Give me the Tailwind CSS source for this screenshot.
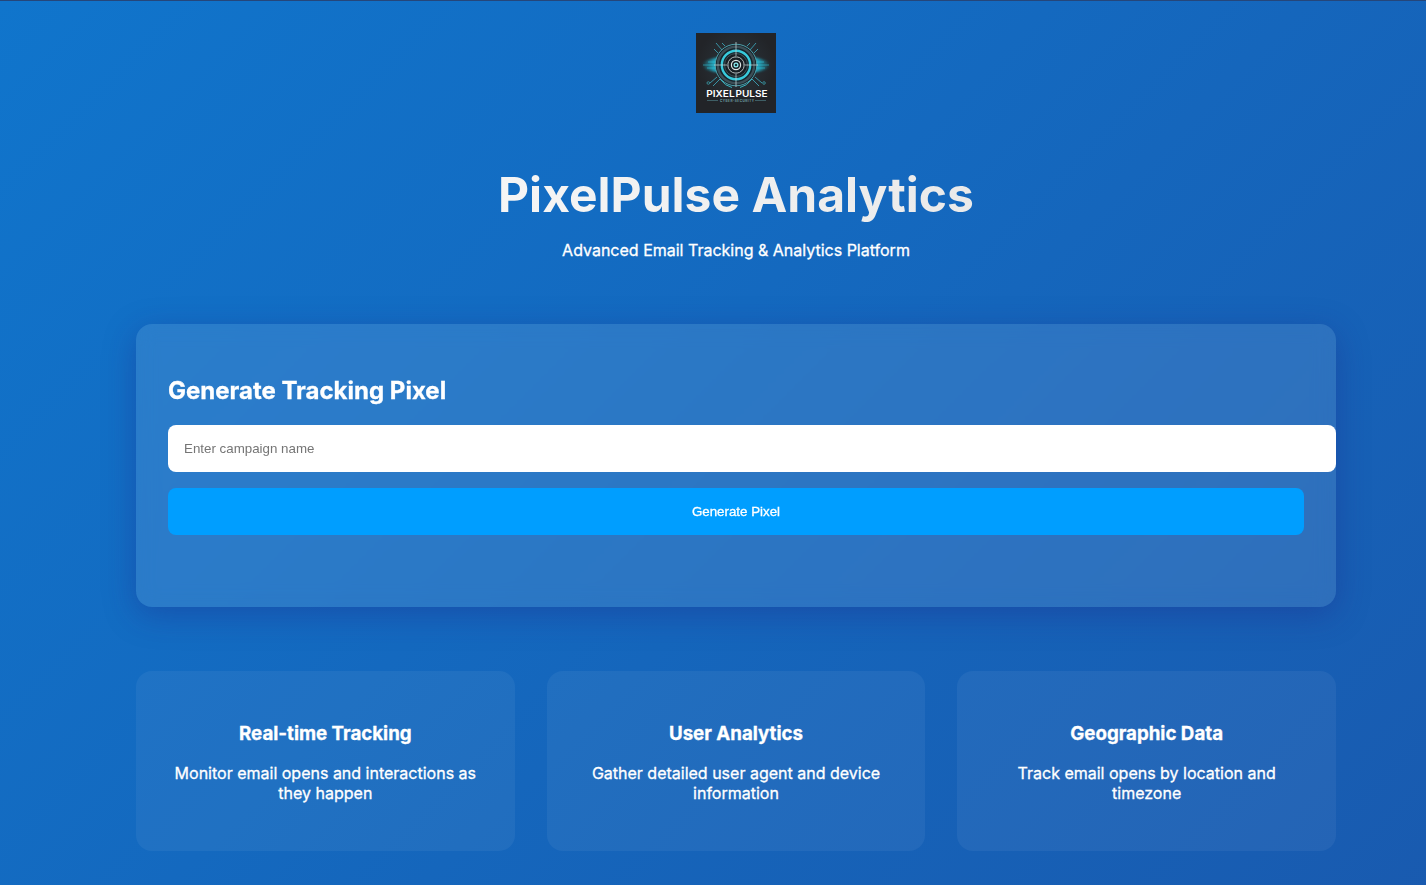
<!DOCTYPE html>
<html lang="en">
<head>
<meta charset="utf-8">
<title>PixelPulse Analytics</title>
<script src="https://cdn.jsdelivr.net/npm/@tailwindcss/browser@4"></script>
</head>
<body class="overflow-hidden">
<div class="w-[1472px] h-[885px] border-t border-[#25467a] bg-[linear-gradient(135deg,#1075cc_0%,#195aaf_100%)] text-white font-['Inter',sans-serif] overflow-hidden">
  <main class="w-[1200px] mx-auto pt-8">
    <header class="flex flex-col items-center text-center">
      <svg class="w-20 h-20" viewBox="0 0 80 80" role="img" aria-label="PixelPulse">
        <defs>
          <radialGradient id="bg"><stop offset="0" stop-color="#2c363d"/><stop offset="1" stop-color="#222428"/></radialGradient>
          <linearGradient id="glow"><stop offset="0" stop-color="#19b5d1" stop-opacity="0"/><stop offset=".2" stop-color="#22bedb" stop-opacity=".9"/><stop offset=".5" stop-color="#147083" stop-opacity=".3"/><stop offset=".8" stop-color="#22bedb" stop-opacity=".9"/><stop offset="1" stop-color="#19b5d1" stop-opacity="0"/></linearGradient>
          <filter id="soft" x="-20%" y="-50%" width="140%" height="200%"><feGaussianBlur stdDeviation="1.3"/></filter>
        </defs>
        <rect width="80" height="80" fill="#222428"/>
        <circle cx="40" cy="32" r="39" fill="url(#bg)"/>
        <ellipse cx="40" cy="32" rx="34" ry="9" fill="url(#glow)" filter="url(#soft)"/>
        <path d="M7 32H21M12 29H21M11 35H21M59 32H73M59 29H68M59 35H69" stroke="#35d4ea" stroke-width=".8" opacity=".65"/>
        <path d="M26 17 20 10M22 20 18 16M54 17 60 10M58 20 62 16M24 46 17 53M21 44 14 50M56 46 63 53M59 44 66 50M29 13 26 10M51 13 54 10" stroke="#3994a6" stroke-width="1"/>
        <circle cx="40" cy="32" r="20.8" fill="#17242b" stroke="#52a9b5" stroke-width=".9"/>
        <circle cx="40" cy="32" r="18.2" fill="none" stroke="#3c4e56" stroke-width="2.4"/>
        <circle cx="40" cy="32" r="14.2" fill="none" stroke="#38cadb" stroke-width="2.4"/>
        <circle cx="40" cy="32" r="11.5" fill="#181f24" stroke="#465f66" stroke-width=".8"/>
        <circle cx="40" cy="32" r="8.2" fill="none" stroke="#b1b9ba" stroke-width="1" stroke-dasharray="11.4 1.48" stroke-dashoffset="-.74"/>
        <path d="M40 9V25M40 39V54M18 32H33M47 32H62" stroke="#b9cccd" stroke-width=".8"/>
        <circle cx="40" cy="32" r="4.6" fill="#181f24" stroke="#dce4e4" stroke-width="1.2"/>
        <circle cx="40" cy="32" r="1.9" fill="#163039" stroke="#8df0f4" stroke-width="1.2"/>
        <path d="M24 46Q29 53 36 54.5M56 46Q51 53 44 54.5" fill="none" stroke="#37b4c1" stroke-width="1"/>
        <circle cx="12.3" cy="50" r="1.3" fill="none" stroke="#3a9aa7" stroke-width=".8"/><circle cx="68" cy="50" r="1.3" fill="none" stroke="#3a9aa7" stroke-width=".8"/>
        <g font-family="Inter, sans-serif" font-size="9.2" font-weight="600" fill="#fff">
          <text x="10.3" y="64.4" textLength="28.4" lengthAdjust="spacingAndGlyphs">PIXEL</text>
          <text x="39.5" y="64.4" textLength="32" lengthAdjust="spacingAndGlyphs">PULSE</text>
        </g>
        <path d="M11 67.5H22M59 67.5H70" stroke="#52878f" stroke-width=".6"/>
        <text x="24" y="68.8" font-family="Inter, sans-serif" font-size="3.2" font-weight="600" fill="#79adb3" textLength="34">CYBER-SECURITY</text>
      </svg>
      <h1 class="mt-[53px] text-5xl leading-[58px] font-bold bg-[linear-gradient(45deg,#ffffff,#e0e0e0)] bg-clip-text text-transparent w-full">PixelPulse Analytics</h1>
      <p class="mt-4 text-base leading-5 [-webkit-text-stroke:0.3px_white]">Advanced Email Tracking &amp; Analytics Platform</p>
    </header>
    <section class="mt-16 h-[283px] rounded-2xl bg-white/10 backdrop-blur-[10px] px-8 pt-[52px] shadow-[0_8px_32px_0_rgba(31,38,135,0.37)]">
      <h2 class="text-2xl leading-[29px] font-bold [-webkit-text-stroke:0.3px_white]">Generate Tracking Pixel</h2>
      <input class="mt-5 block w-[1168px] h-[47px] rounded-lg bg-white px-4 font-['Liberation_Sans',Arial,sans-serif] text-[13.333px] text-black placeholder:text-[#757575] outline-none" placeholder="Enter campaign name">
      <button class="mt-4 block w-full h-[47px] rounded-lg bg-[#009eff] font-['Liberation_Sans',Arial,sans-serif] text-[13.333px] text-white [-webkit-text-stroke:0.3px_white]">Generate Pixel</button>
    </section>
    <section class="mt-16 grid grid-cols-3 gap-8 text-center">
      <article class="h-[180px] rounded-2xl bg-white/5 px-8 pt-[51px]">
        <h3 class="text-[18.72px] leading-[23px] font-bold [-webkit-text-stroke:0.3px_white]">Real-time Tracking</h3>
        <p class="mt-[18px] leading-5 [-webkit-text-stroke:0.3px_white]">Monitor email opens and interactions as they happen</p>
      </article>
      <article class="h-[180px] rounded-2xl bg-white/5 px-8 pt-[51px]">
        <h3 class="text-[18.72px] leading-[23px] font-bold [-webkit-text-stroke:0.3px_white]">User Analytics</h3>
        <p class="mt-[18px] leading-5 [-webkit-text-stroke:0.3px_white]">Gather detailed user agent and device information</p>
      </article>
      <article class="h-[180px] rounded-2xl bg-white/5 px-8 pt-[51px]">
        <h3 class="text-[18.72px] leading-[23px] font-bold [-webkit-text-stroke:0.3px_white]">Geographic Data</h3>
        <p class="mt-[18px] leading-5 [-webkit-text-stroke:0.3px_white]">Track email opens by location and timezone</p>
      </article>
    </section>
  </main>
</div>
</body>
</html>
